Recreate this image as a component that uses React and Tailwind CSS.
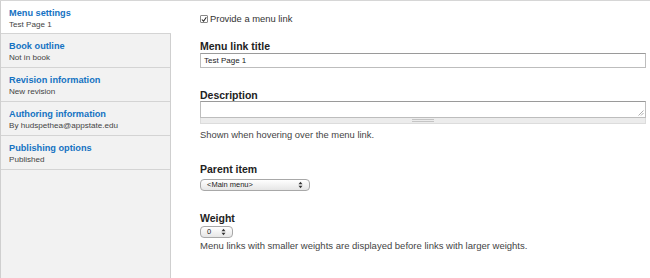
import React from "react";

const tabs = [
  { t: "Menu settings", s: "Test Page 1", sel: true },
  { t: "Book outline", s: "Not in book" },
  { t: "Revision information", s: "New revision" },
  { t: "Authoring information", s: "By hudspethea@appstate.edu" },
  { t: "Publishing options", s: "Published" },
];

function Updown() {
  return (
    <svg width="5" height="8" viewBox="0 0 5 8" className="shrink-0">
      <path d="M0.5 3.2 L2.5 0.8 L4.5 3.2 Z" fill="#333" />
      <path d="M0.5 4.8 L2.5 7.2 L4.5 4.8 Z" fill="#333" />
    </svg>
  );
}

export default function App() {
  return (
    <div
      className="flex w-[650px] h-[278px] overflow-hidden border-t border-[#d6d6d6] bg-white"
      style={{ fontFamily: '"Liberation Sans", Arial, sans-serif' }}
    >
      <ul className="w-[171px] shrink-0 border-l border-r border-[#cfcfcf] bg-[#f2f2f2]">
        {tabs.map((tab, i) => (
          <li
            key={i}
            className={
              (tab.sel ? "bg-white -mr-px relative h-[33px] " : "h-[34px] ") +
              "border-b border-[#d4d4d4] pl-[8px] pt-[7px]"
            }
          >
            <div className="text-[9.2px] font-bold leading-[11px] text-[#1572c2]">{tab.t}</div>
            <div className="text-[8.1px] leading-[11px] text-[#444]">{tab.s}</div>
          </li>
        ))}
      </ul>

      <div className="flex-1 pl-[29px] pr-[4px] pt-[12px] flex flex-col">
        <div className="flex items-center h-[12px] gap-[2px]">
          <div className="w-[8px] h-[8px] border border-[#888] rounded-[1px] bg-white flex items-center justify-center">
            <svg width="7" height="7" viewBox="0 0 7 7">
              <path d="M1 3.5 L3 5.5 L6.2 0.8" stroke="#222" strokeWidth="1.2" fill="none" />
            </svg>
          </div>
          <span className="text-[9.4px] leading-[12px] text-[#333]">Provide a menu link</span>
        </div>

        <div className="mt-[15px] text-[10.5px] font-bold leading-[12px] text-[#222]">Menu link title</div>
        <div className="mt-px h-[15px] border border-[#bdbdbd] border-t-[#9a9a9a] bg-white flex items-center pl-[3px] text-[8px] text-[#222]">
          Test Page 1
        </div>

        <div className="mt-[21px] text-[10.5px] font-bold leading-[12px] text-[#222]">Description</div>
        <div className="relative h-[17px] border border-[#bdbdbd] border-t-[#9a9a9a] bg-white">
          <svg width="6" height="6" viewBox="0 0 6 6" className="absolute right-px bottom-px">
            <path d="M5.5 0.5 L0.5 5.5 M5.5 3 L3 5.5" stroke="#999" strokeWidth="0.8" />
          </svg>
        </div>
        <div className="h-[6px] bg-[#ececec] border-x border-b border-[#dcdcdc] flex items-center justify-center">
          <div className="w-[22px] h-[3px] border-y border-[#c4c4c4]" />
        </div>
        <div className="mt-[5px] text-[9.4px] leading-[12px] text-[#444]">Shown when hovering over the menu link.</div>

        <div className="mt-[22px] text-[10.5px] font-bold leading-[12px] text-[#222]">Parent item</div>
        <div className="mt-[4px] w-[110px] h-[12px] rounded-[4px] border border-[#a8a8a8] bg-gradient-to-b from-white to-[#e6e6e6] flex items-center justify-between pl-[6px] pr-[6px]">
          <span className="text-[7.5px] leading-none text-[#222]">&lt;Main menu&gt;</span>
          <Updown />
        </div>

        <div className="mt-[21px] text-[10.5px] font-bold leading-[12px] text-[#222]">Weight</div>
        <div className="mt-[2px] w-[33px] h-[12px] rounded-[4px] border border-[#a8a8a8] bg-gradient-to-b from-white to-[#e6e6e6] flex items-center justify-between pl-[6px] pr-[6px]">
          <span className="text-[7.5px] leading-none text-[#222]">0</span>
          <Updown />
        </div>
        <div className="mt-[2px] text-[9.5px] leading-[12px] text-[#444]">
          Menu links with smaller weights are displayed before links with larger weights.
        </div>
      </div>
    </div>
  );
}
